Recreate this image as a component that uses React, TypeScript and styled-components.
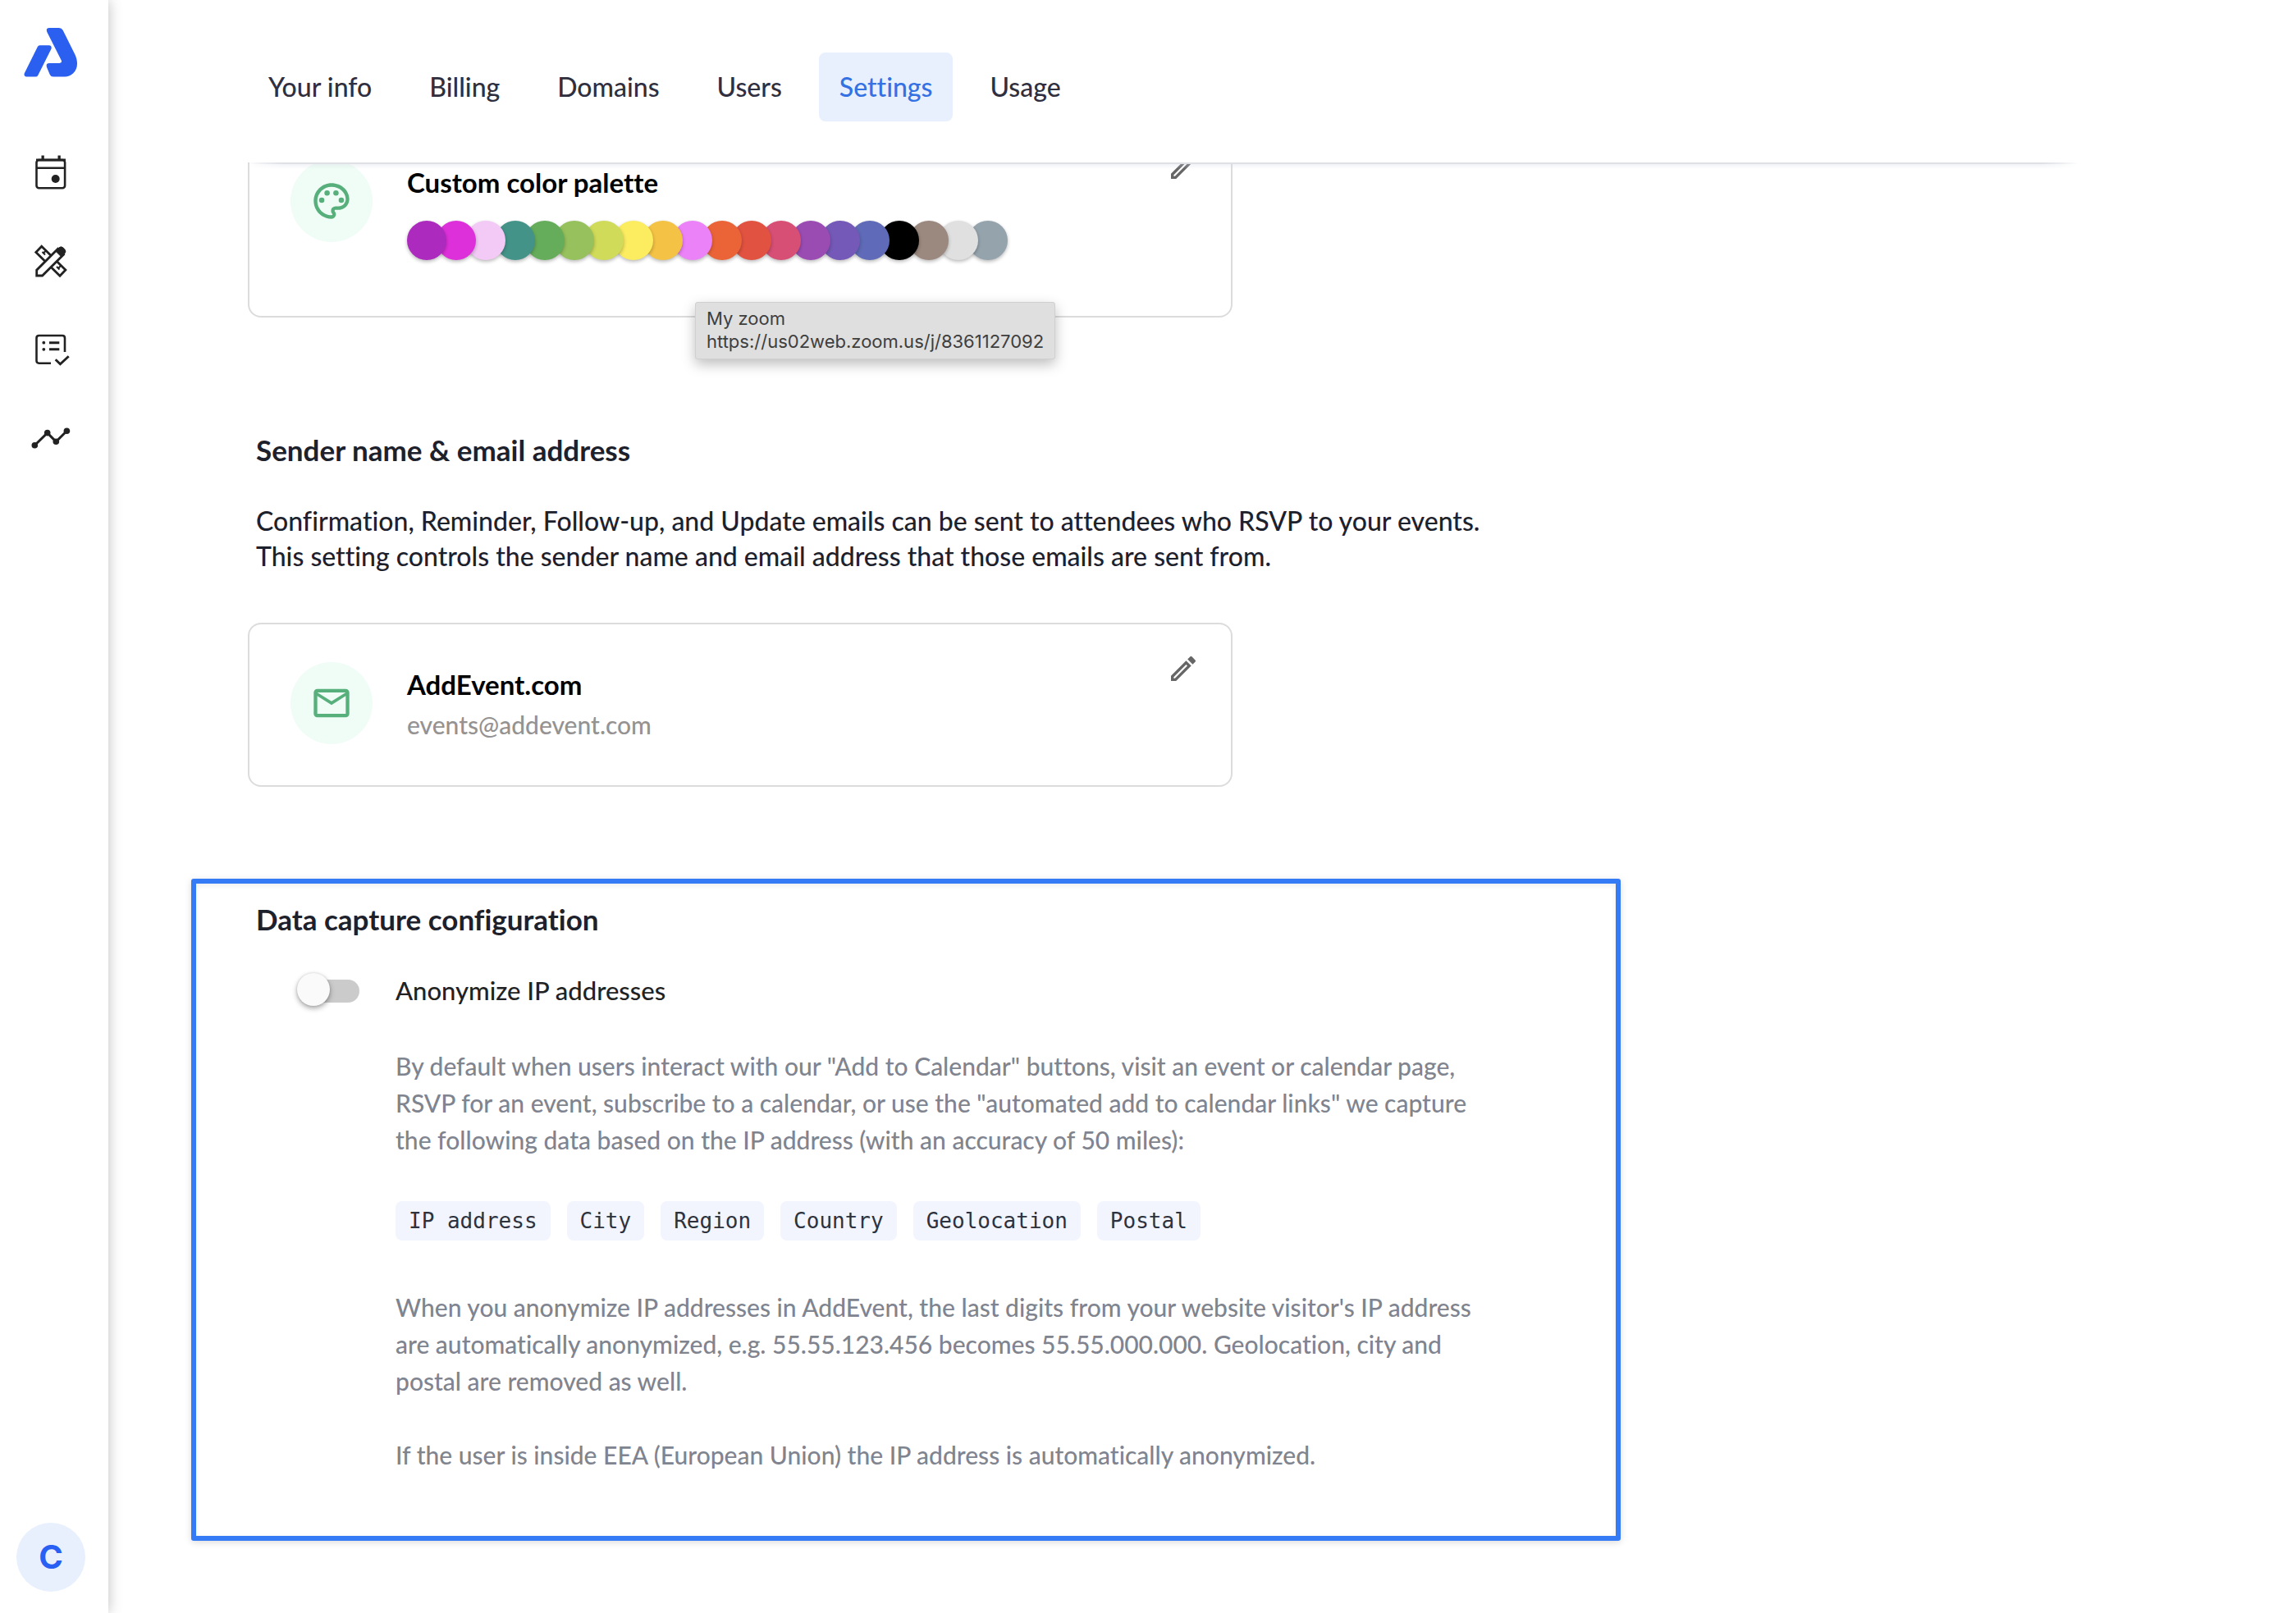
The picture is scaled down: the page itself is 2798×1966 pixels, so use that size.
import React, { useState } from 'react';
import styled, { createGlobalStyle } from 'styled-components';
import { MdMailOutline, MdOutlineEdit, MdOutlinePalette } from 'react-icons/md';

const GlobalStyle = createGlobalStyle`
  *, *::before, *::after { box-sizing: border-box; }
  body {
    margin: 0;
    background: #fff;
    color: #1d212c;
    font-family: Lato, "Liberation Sans", sans-serif;
    font-weight: 500;
    font-variant-ligatures: none;
    -webkit-font-smoothing: antialiased;
  }
  h2, h3, p, ul { margin: 0; padding: 0; }
  ul { list-style: none; }
`;

const Shell = styled.div`
  display: grid;
  grid-template-columns: 132px minmax(0, 1fr);
  min-height: 100vh;
`;

const Sidebar = styled.aside`
  position: relative;
  z-index: 2;
  display: flex;
  flex-direction: column;
  align-items: center;
  padding: 34px 8px 26px 0;
  background: #fff;
  box-shadow: 0 0 16px rgba(0, 0, 0, 0.26);
`;

const HomeLink = styled.a`
  display: block;
  width: 66px;
  height: 60px;
`;

const SideNav = styled.nav`
  display: flex;
  flex-direction: column;
  gap: 60px;
  margin-top: 93px;
`;

const SideLink = styled.a`
  display: block;
  width: 48px;
  height: 48px;
  color: #222;

  svg { display: block; overflow: visible; }
`;

const Avatar = styled.button`
  width: 84px;
  height: 84px;
  margin-top: auto;
  padding: 0;
  border: 0;
  border-radius: 50%;
  background: #e8f0fe;
  color: #2a5ff3;
  font: 700 40px/84px Inter, "Liberation Sans", sans-serif;
`;

const Main = styled.main`
  min-width: 0;
  overflow: hidden;
`;

const Header = styled.header`
  position: relative;
  z-index: 1;
  padding: 64px 266px 50px 170px;
  background: #fff;

  &::before,
  &::after {
    content: '';
    position: absolute;
    left: 170px;
    right: 266px;
    top: 100%;
    mask-image: linear-gradient(90deg, transparent, #000 44px, #000 calc(100% - 44px), transparent);
  }
  &::before {
    height: 8px;
    background: linear-gradient(rgba(210, 212, 226, 0.4), rgba(210, 212, 226, 0));
  }
  &::after {
    height: 2px;
    background: #dfe0e6;
  }
`;

const Tabs = styled.nav`
  display: flex;
  gap: 20px;
`;

const Tab = styled.a<{ $active: boolean }>`
  height: 84px;
  padding: 0 25px;
  border-radius: 8px;
  background: ${(p) => (p.$active ? '#e8f0fe' : 'transparent')};
  color: ${(p) => (p.$active ? '#3471e3' : '#2f2f3f')};
  font-size: 32px;
  line-height: 84px;
  text-decoration: none;
`;

/* The list is scrolled: its first card starts underneath the header. */
const Content = styled.div`
  margin-top: -51px;
  padding: 0 40px 88px 170px;
`;

const Card = styled.section<{ $tall?: boolean }>`
  position: relative;
  display: flex;
  align-items: flex-start;
  max-width: 1200px;
  min-height: ${(p) => (p.$tall ? 240 : 200)}px;
  padding: 46px 38px 0 50px;
  border: 2px solid #dcdcdc;
  border-radius: 16px;
`;

const Badge = styled.div`
  display: flex;
  flex: none;
  align-items: center;
  justify-content: center;
  width: 100px;
  height: 100px;
  border-radius: 50%;
  background: #effdf6;
  color: #57b07c;
`;

const CardBody = styled.div`
  flex: 1;
  min-width: 0;
  margin-left: 42px;
`;

const CardTitle = styled.h3`
  color: #000;
  font-size: 33px;
  font-weight: 700;
  line-height: 54px;
`;

const CardNote = styled.p`
  color: #959292;
  font-size: 30px;
  line-height: 45px;
`;

const EditButton = styled.button`
  flex: none;
  margin-top: -12px;
  padding: 0;
  border: 0;
  background: none;
  color: #666;

  svg { display: block; }
`;

const Swatches = styled.ul`
  display: flex;
  margin-top: 20px;
  isolation: isolate;
`;

const Swatch = styled.li<{ $color: string; $order: number }>`
  position: relative;
  z-index: ${(p) => p.$order};
  width: 48px;
  height: 48px;
  margin-right: -12px;
  border-radius: 50%;
  background: ${(p) => p.$color};
  box-shadow: 0 2px 4px rgba(0, 0, 0, 0.28);
`;

const Tooltip = styled.div`
  position: absolute;
  top: 219px;
  left: 543px;
  padding: 5px 13px 7px;
  border: 1px solid #d0d0d0;
  border-radius: 3px;
  background: #dfdfdf;
  box-shadow: 0 6px 16px rgba(0, 0, 0, 0.26);
  color: #3e3e3e;
  font: 400 22px/28px Inter, "Liberation Sans", sans-serif;
  white-space: nowrap;
`;

const SenderSection = styled.section`
  margin: 139px 0 60px 10px;
`;

const Heading = styled.h2`
  font-size: 35px;
  font-weight: 700;
  line-height: 44px;
`;

const Intro = styled.p`
  max-width: 1540px;
  margin-top: 43px;
  font-size: 32px;
  line-height: 43px;
`;

const Highlight = styled.section`
  max-width: 1742px;
  margin: 112px 0 0 -69px;
  padding: 21px 40px 76px 73px;
  border: 6px solid #367bf6;
  border-radius: 3px;
  box-shadow: 0 2px 8px rgba(0, 0, 0, 0.14), inset 0 2px 6px rgba(0, 0, 0, 0.08);
`;

const Setting = styled.div`
  display: grid;
  grid-template-columns: 74px minmax(0, 1340px);
  column-gap: 44px;
  align-items: center;
  margin: 43px 0 0 52px;
`;

const Switch = styled.input`
  position: relative;
  appearance: none;
  width: 74px;
  height: 28px;
  margin: 0;
  border-radius: 14px;
  background: ${(p) => (p.checked ? '#9dbcf8' : '#cbcbcb')};

  &::before {
    content: '';
    position: absolute;
    top: -8px;
    left: ${(p) => (p.checked ? 36 : -2)}px;
    width: 40px;
    height: 40px;
    border-radius: 50%;
    background: #fafafa;
    box-shadow: 0 3px 6px rgba(0, 0, 0, 0.34), 0 0 3px rgba(0, 0, 0, 0.14);
  }
`;

const SwitchLabel = styled.label`
  color: #222;
  font-size: 31px;
  line-height: 45px;
`;

const Details = styled.div`
  grid-column: 2;
  margin-top: 47px;
  color: #80848f;
  font-size: 30px;
  line-height: 45px;

  p + p { margin-top: 45px; }
`;

const Chips = styled.ul`
  display: flex;
  flex-wrap: wrap;
  gap: 20px;
  margin: 52px 0 59px;
`;

const Chip = styled.li`
  padding: 0 16px;
  border-radius: 8px;
  background: #f2f5fe;
  color: #2e323c;
  font: 400 26px/48px "DejaVu Sans Mono", monospace;
`;

const tabs = ['Your info', 'Billing', 'Domains', 'Users', 'Settings', 'Usage'];

const palette = [
  '#ac2abd', '#de30da', '#f3c9f6', '#439388', '#66ad5b', '#97c15c', '#d0db59',
  '#fbec60', '#f4c244', '#ec82f8', '#eb6437', '#e15241', '#d84f76', '#9a4cb3',
  '#7559b8', '#5f6bb8', '#000000', '#9b887e', '#e0e0e0', '#95a3ad',
];

const capturedFields = ['IP address', 'City', 'Region', 'Country', 'Geolocation', 'Postal'];

const Logo = () => (
  <svg width="66" height="60" viewBox="0 0 66 60" fill="#2a5ff0" aria-hidden="true">
    <path d="M3.500 56.6 19.5 24.3H30.7L14.5 56.6Z" stroke="#2a5ff0" strokeWidth="6" strokeLinejoin="round" />
    <path d="M31 0H43Q46 0 47.6 2.8L62.4 32.5C66.4 41 66 50 60 55.5 57 58.3 53.5 59.6 50 59.6H36Q33 59.6 31.8 57L28 48Q26.500 43 31 43H43.500Q47.200 42.600 45.600 39.300L28.300 5Q26.500 0 31 0Z" />
  </svg>
);

const CalendarIcon = () => (
  <svg width="48" height="48" viewBox="0 0 48 48" fill="currentColor" aria-hidden="true">
    <rect x="6.5" y="8" width="34.6" height="34.2" rx="3" fill="none" stroke="currentColor" strokeWidth="2.6" />
    <path d="M6 6.600H42V9.500H6ZM6 16.400H42V18.900H6ZM12.500 2.400H15.800V8H12.500ZM32.500 2.400H35.800V8H32.500Z" />
    <circle cx="29.700" cy="31" r="5" />
  </svg>
);

const DesignIcon = () => (
  <svg width="48" height="48" viewBox="0 0 48 48" fill="none" stroke="currentColor" strokeWidth="2.8" aria-hidden="true">
    <path d="M5.800 12.400 12.700 5.300 41.900 34 35 41.200Z" />
    <path d="M18.500 10 15 13.500M17 15.500 13.500 12M36.500 28.500 33 32M34.500 33.500 31 30" strokeWidth="2" />
    <path d="M6.700 41V34.200L32.600 8.300 39.500 15.200 13.600 41Z" fill="#fff" />
    <path d="M29.700 11 33.800 6.900Q36.500 4.600 39.300 7.200L40.500 8.400Q43.200 11.200 40.800 13.900L36.700 18Z" fill="currentColor" strokeWidth="1" />
  </svg>
);

const FormsIcon = () => (
  <svg width="48" height="48" viewBox="0 0 48 48" fill="none" stroke="currentColor" strokeWidth="2.6" aria-hidden="true">
    <path d="M24 39.700H9.500Q6.500 39.700 6.500 36.700V9Q6.500 6 9.500 6H38Q41 6 41 9V26" />
    <path d="M22 14.700H34.300M22 22.800H34.300M29.700 35.300 35.400 40.800 45.700 31.200" strokeWidth="2.900" />
    <circle cx="15.300" cy="14.700" r="1.900" fill="currentColor" stroke="none" />
    <circle cx="15.300" cy="22.800" r="1.900" fill="currentColor" stroke="none" />
  </svg>
);

const AnalyticsIcon = () => (
  <svg width="48" height="48" viewBox="0 0 48 48" fill="currentColor" aria-hidden="true">
    <path d="M4.300 31.700 19.700 16.600 30.300 27.300 43.400 14.300" fill="none" stroke="currentColor" strokeWidth="3" />
    <circle cx="4.300" cy="31.700" r="3.800" />
    <circle cx="19.700" cy="16.600" r="3.800" />
    <circle cx="30.300" cy="27.300" r="3.800" />
    <circle cx="43.400" cy="14.300" r="3.800" />
  </svg>
);

export default function App() {
  const [anonymize, setAnonymize] = useState(false);

  return (
    <>
      <GlobalStyle />
      <Shell>
        <Sidebar>
          <HomeLink href="#home" aria-label="Home"><Logo /></HomeLink>
          <SideNav aria-label="Main">
            <SideLink href="#calendars" aria-label="Calendars"><CalendarIcon /></SideLink>
            <SideLink href="#design" aria-label="Design"><DesignIcon /></SideLink>
            <SideLink href="#forms" aria-label="Forms"><FormsIcon /></SideLink>
            <SideLink href="#analytics" aria-label="Analytics"><AnalyticsIcon /></SideLink>
          </SideNav>
          <Avatar type="button">C</Avatar>
        </Sidebar>

        <Main>
          <Header>
            <Tabs aria-label="Account">
              {tabs.map((name) => (
                <Tab key={name} href="#tab" $active={name === 'Settings'}>{name}</Tab>
              ))}
            </Tabs>
          </Header>

          <Content>
            <Card $tall>
              <Badge><MdOutlinePalette size={52} /></Badge>
              <CardBody>
                <CardTitle>Custom color palette</CardTitle>
                <Swatches>
                  {palette.map((color, i) => (
                    <Swatch key={color} $color={color} $order={palette.length - i} />
                  ))}
                </Swatches>
              </CardBody>
              <EditButton type="button" aria-label="Edit color palette"><MdOutlineEdit size={40} /></EditButton>
              <Tooltip role="tooltip">
                My zoom<br />https://us02web.zoom.us/j/8361127092
              </Tooltip>
            </Card>

            <SenderSection>
              <Heading>Sender name &amp; email address</Heading>
              <Intro>
                Confirmation, Reminder, Follow-up, and Update emails can be sent to attendees who RSVP to
                your events. This setting controls the sender name and email address that those emails are
                sent from.
              </Intro>
            </SenderSection>

            <Card>
              <Badge><MdMailOutline size={52} /></Badge>
              <CardBody>
                <CardTitle>AddEvent.com</CardTitle>
                <CardNote>events@addevent.com</CardNote>
              </CardBody>
              <EditButton type="button" aria-label="Edit sender"><MdOutlineEdit size={40} /></EditButton>
            </Card>

            <Highlight>
              <Heading>Data capture configuration</Heading>
              <Setting>
                <Switch
                  id="anonymize"
                  type="checkbox"
                  checked={anonymize}
                  onChange={(e) => setAnonymize(e.target.checked)}
                />
                <SwitchLabel htmlFor="anonymize">Anonymize IP addresses</SwitchLabel>
                <Details>
                  <p>
                    By default when users interact with our "Add to Calendar" buttons, visit an event or
                    calendar page, RSVP for an event, subscribe to a calendar, or use the "automated add to
                    calendar links" we capture the following data based on the IP address (with an accuracy
                    of 50 miles):
                  </p>
                  <Chips>
                    {capturedFields.map((field) => <Chip key={field}>{field}</Chip>)}
                  </Chips>
                  <p>
                    When you anonymize IP addresses in AddEvent, the last digits from your website visitor's
                    IP address are automatically anonymized, e.g. 55.55.123.456 becomes 55.55.000.000.
                    Geolocation, city and postal are removed as well.
                  </p>
                  <p>If the user is inside EEA (European Union) the IP address is automatically anonymized.</p>
                </Details>
              </Setting>
            </Highlight>
          </Content>
        </Main>
      </Shell>
    </>
  );
}
